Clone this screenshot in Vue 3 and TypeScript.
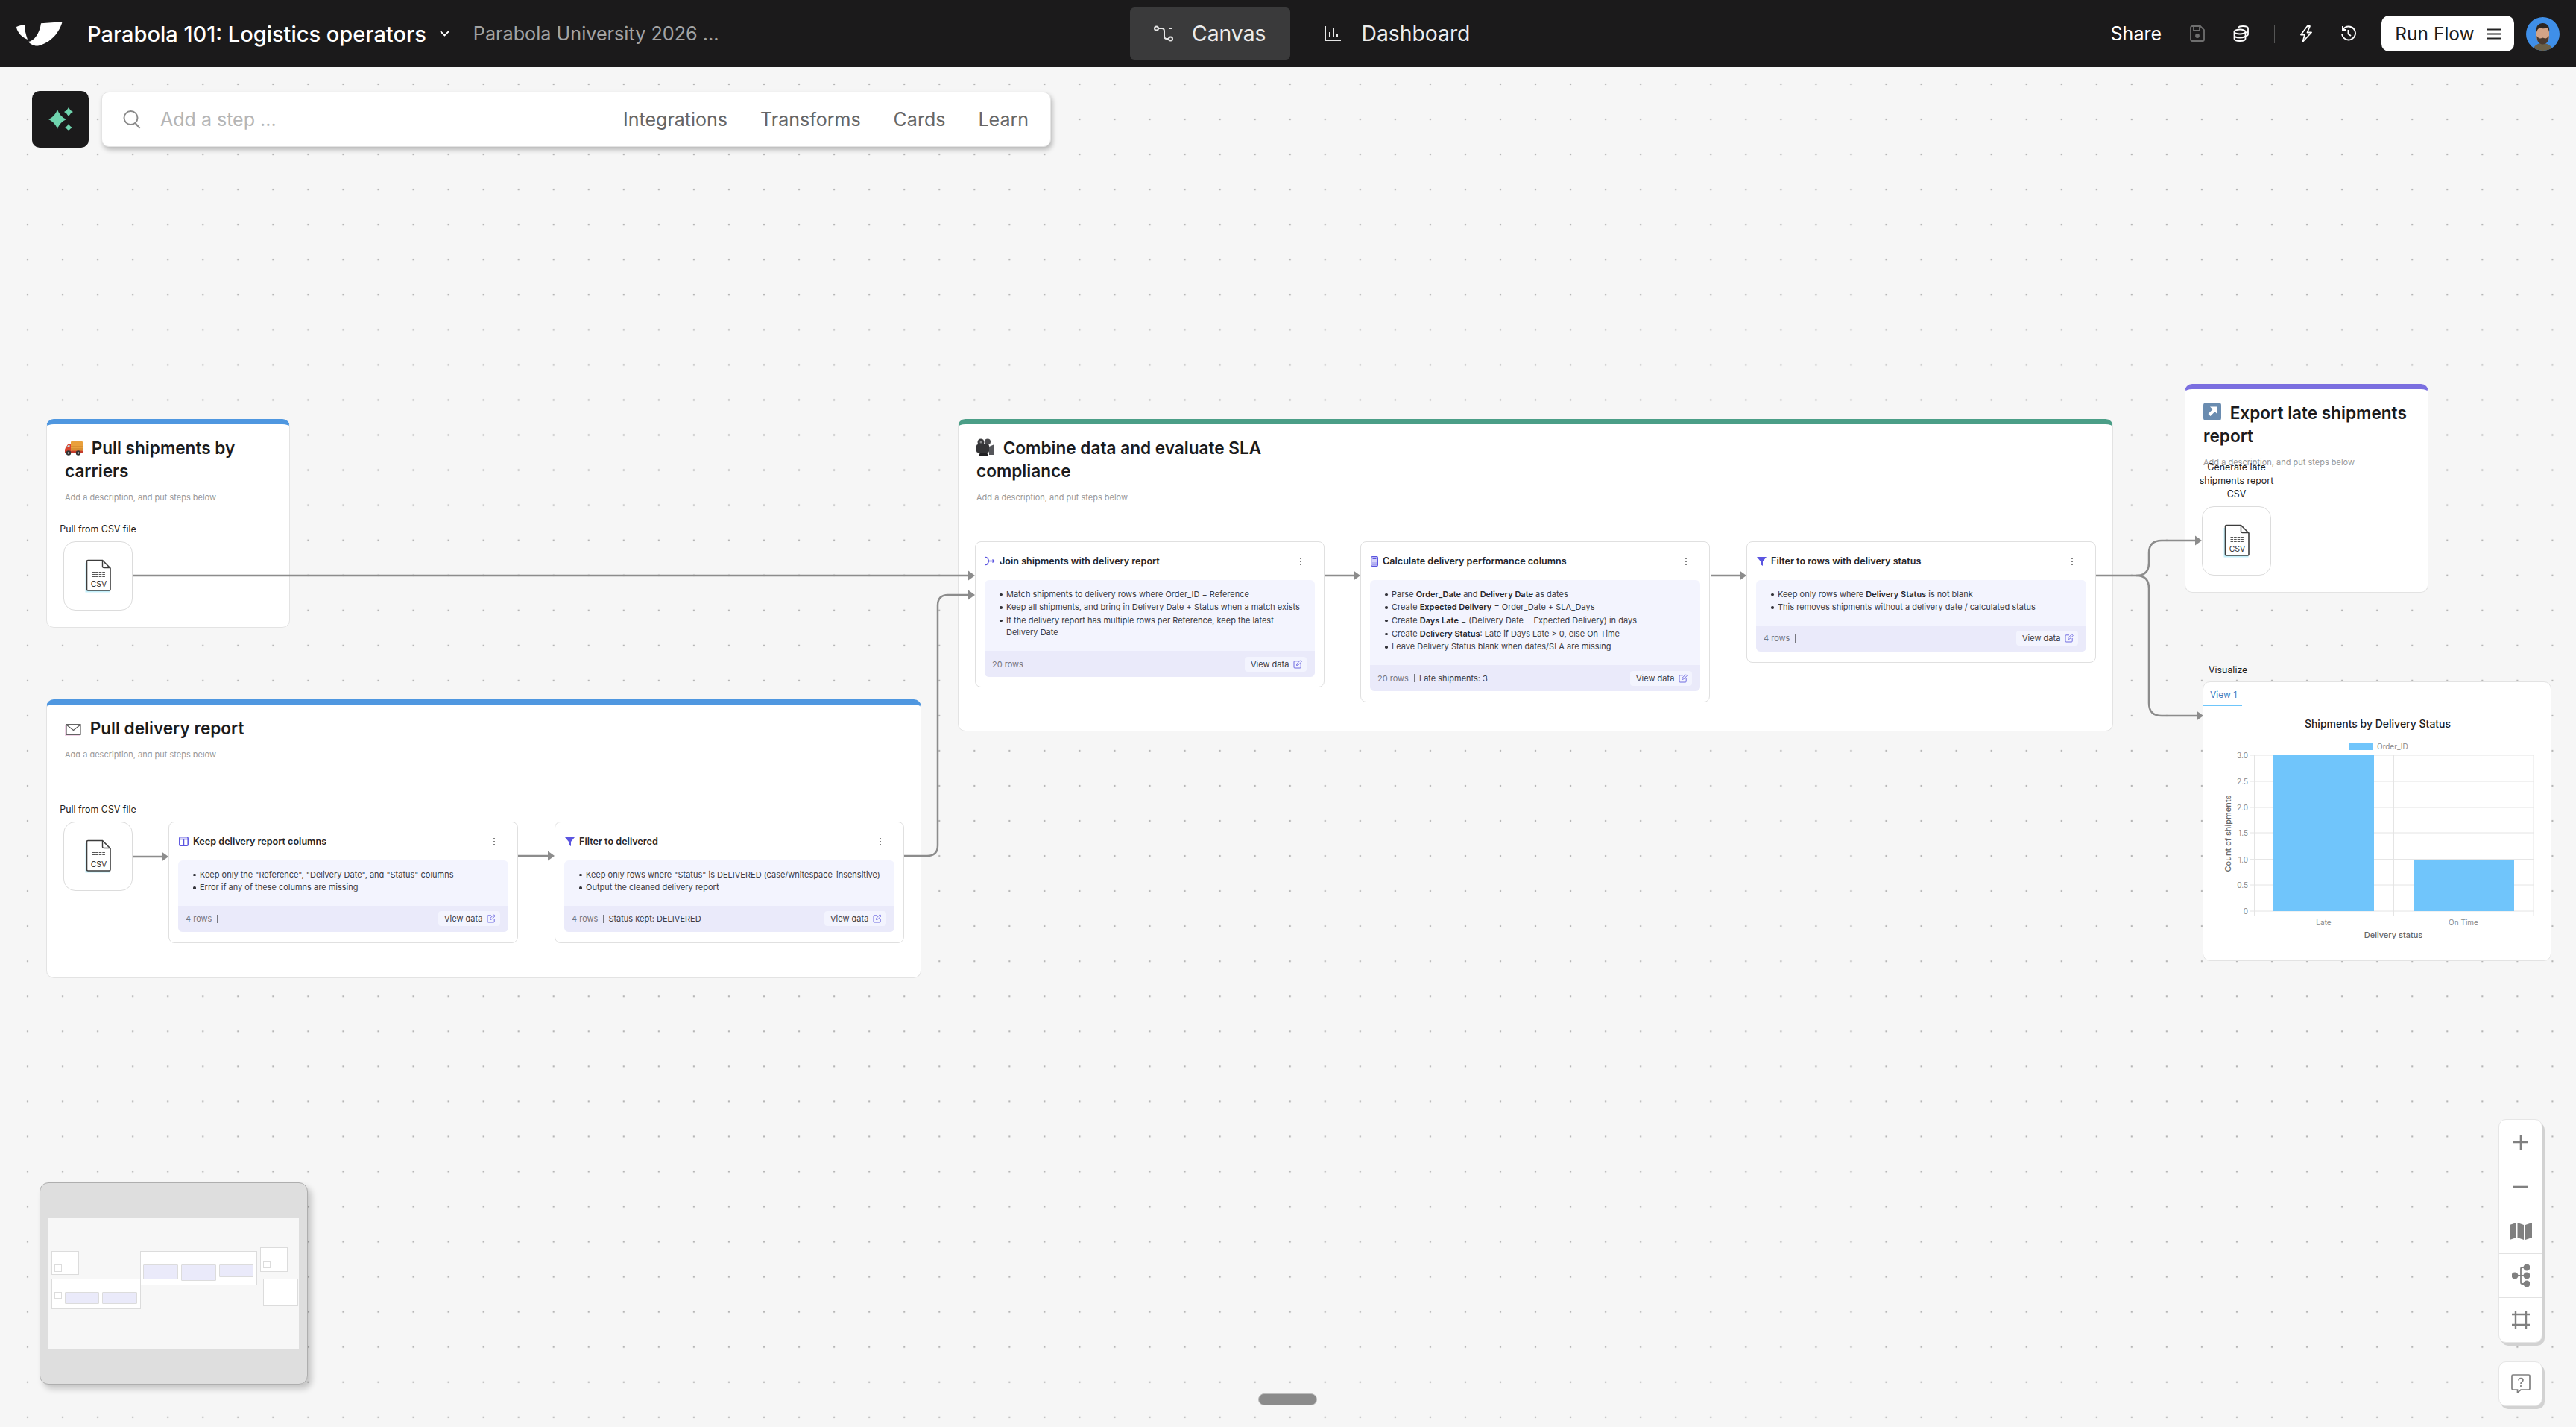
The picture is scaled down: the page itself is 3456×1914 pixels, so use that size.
<script setup lang="ts">
// canvas nodes use page coordinates, the toolbar takes the first 90px
const TOP = 90;

interface Group { x: number; y: number; w: number; h: number; color: string; title: string; icon: string }
interface Step { x: number; y: number; h: number; icon: string; title: string; lines: string[]; rows: string; note?: string }

const groups: Group[] = [
  { x: 62, y: 562, w: 327, h: 280, color: '#4f97e0', title: 'Pull shipments by carriers', icon: 'truck' },
  { x: 62, y: 938, w: 1174, h: 374, color: '#4f97e0', title: 'Pull delivery report', icon: 'mail' },
  { x: 1285, y: 562, w: 1550, h: 419, color: '#4b9e87', title: 'Combine data and evaluate SLA compliance', icon: 'camera' },
  { x: 2931, y: 515, w: 327, h: 280, color: '#7b6fe0', title: 'Export late shipments report', icon: 'export' },
];

const sources = [
  { x: 85, y: 726, label: 'Pull from CSV file' },
  { x: 85, y: 1102, label: 'Pull from CSV file' },
  { x: 2954, y: 679, label: 'Generate late shipments report CSV' },
];

// *text* marks the bold parts of a line
const steps: Step[] = [
  {
    x: 226, y: 1102, h: 163, icon: 'columns', title: 'Keep delivery report columns', rows: '4 rows',
    lines: ['Keep only the "Reference", "Delivery Date", and "Status" columns', 'Error if any of these columns are missing'],
  },
  {
    x: 744, y: 1102, h: 163, icon: 'filter', title: 'Filter to delivered', rows: '4 rows', note: 'Status kept: DELIVERED',
    lines: ['Keep only rows where "Status" is DELIVERED (case/whitespace-insensitive)', 'Output the cleaned delivery report'],
  },
  {
    x: 1308, y: 726, h: 196, icon: 'join', title: 'Join shipments with delivery report', rows: '20 rows',
    lines: [
      'Match shipments to delivery rows where Order_ID = Reference',
      'Keep all shipments, and bring in Delivery Date + Status when a match exists',
      'If the delivery report has multiple rows per Reference, keep the latest Delivery Date',
    ],
  },
  {
    x: 1825, y: 726, h: 216, icon: 'calc', title: 'Calculate delivery performance columns', rows: '20 rows', note: 'Late shipments: 3',
    lines: [
      'Parse *Order_Date* and *Delivery Date* as dates',
      'Create *Expected Delivery* = Order_Date + SLA_Days',
      'Create *Days Late* = (Delivery Date − Expected Delivery) in days',
      'Create *Delivery Status*: Late if Days Late > 0, else On Time',
      'Leave Delivery Status blank when dates/SLA are missing',
    ],
  },
  {
    x: 2343, y: 726, h: 163, icon: 'filter', title: 'Filter to rows with delivery status', rows: '4 rows',
    lines: ['Keep only rows where *Delivery Status* is not blank', 'This removes shipments without a delivery date / calculated status'],
  },
];

const edges = [
  'M178 772H1300',
  'M1212 1148H1244Q1258 1148 1258 1134V812Q1258 798 1272 798H1300',
  'M178 1149H218',
  'M695 1148H736',
  'M1777 772H1817',
  'M2295 772H2335',
  'M2812 772H2866Q2883 772 2883 755V742Q2883 725 2900 725H2946',
  'M2866 772Q2883 772 2883 789V943Q2883 960 2900 960H2948',
];
const arrowTips = [[1308, 772], [1308, 798], [226, 1149], [744, 1148], [1825, 772], [2343, 772], [2954, 725], [2956, 960]];

function arrow([x, y]: number[]) {
  return `${x - 9},${y - 6.5} ${x},${y} ${x - 9},${y + 6.5}`;
}

function box(n: { x: number; y: number; w?: number; h?: number }) {
  return {
    left: `${n.x}px`,
    top: `${n.y - TOP}px`,
    width: n.w ? `${n.w}px` : undefined,
    height: n.h ? `${n.h}px` : undefined,
  };
}

const yTicks = [
  { label: '3.0', y: 99 }, { label: '2.5', y: 134 }, { label: '2.0', y: 169 }, { label: '1.5', y: 203 },
  { label: '1.0', y: 238.6 }, { label: '0.5', y: 273 }, { label: '0', y: 308 },
];

const miniNodes = [
  { x: 3.7, y: 44, w: 37, h: 32, k: 'white' },
  { x: 3.7, y: 80.7, w: 120, h: 41, k: 'white' },
  { x: 123.3, y: 44, w: 156.3, h: 45.7, k: 'white' },
  { x: 283.7, y: 39, w: 37.3, h: 32.7, k: 'white' },
  { x: 288.3, y: 80.7, w: 46.3, h: 37, k: 'white' },
  { x: 8.3, y: 62, w: 9.5, h: 9.7, k: 'white' },
  { x: 8.3, y: 98.7, w: 9.5, h: 9.7, k: 'white' },
  { x: 288.3, y: 57.7, w: 9.5, h: 9.7, k: 'white' },
  { x: 22, y: 98.7, w: 46.3, h: 16.3, k: 'step' },
  { x: 72.3, y: 98.7, w: 46.7, h: 16.3, k: 'step' },
  { x: 127.3, y: 62, w: 46.7, h: 20, k: 'step' },
  { x: 178, y: 62, w: 46.7, h: 22, k: 'step' },
  { x: 228.7, y: 62, w: 46.7, h: 16.7, k: 'step' },
];
</script>

<template>
  <div class="page">
    <header class="topbar">
      <div class="brand">
        <svg class="logo" width="62" height="33" viewBox="0 0 62 33" fill="#fff">
          <path d="M61.6 0C58 14 46 29 29 32.4 24 33 19 30.500 16 27 24 26 31 16 33 2.300 42 1.500 52 1 61.600 0Z" />
          <path d="M0 7C4 5 8 4.500 11 4 11 10 12.500 17 15 24 8 21 1 15 0 7Z" />
        </svg>
        <span class="flow-name">Parabola 101: Logistics operators</span>
        <svg class="chevron" width="13" height="8" viewBox="0 0 13 8" fill="none" stroke="#fff" stroke-width="1.8"><path d="M1 1l5.500 5.500L12 1" /></svg>
        <span class="folder">Parabola University 2026 ...</span>
      </div>
      <nav class="tabs">
        <a class="tab active">
          <svg width="26" height="22" viewBox="0 0 26 22" fill="none" stroke="#e6e6e6" stroke-width="2">
            <circle cx="3.500" cy="4" r="2.500" /><circle cx="22.500" cy="18" r="2.500" />
            <path d="M6 4h5c3 0 3 2 3 4v6c0 2 1 4 3 4h3" /><path d="M20 4h4" />
          </svg>
          Canvas
        </a>
        <a class="tab">
          <svg width="26" height="22" viewBox="0 0 26 22" fill="none" stroke="#e6e6e6" stroke-width="2">
            <path d="M3 1v19h21" /><path d="M9 15V9M14 15V4M19 15v-4" />
          </svg>
          Dashboard
        </a>
      </nav>
      <div class="actions">
        <span class="share">Share</span>
        <svg width="22" height="22" viewBox="0 0 22 22" fill="none" stroke="#6f6f6f" stroke-width="1.800">
          <path d="M2 3a2 2 0 0 1 2-2h11l5 5v13a2 2 0 0 1-2 2H4a2 2 0 0 1-2-2z" /><path d="M6 1v6h8V1" /><circle cx="11" cy="14" r="2" fill="#6f6f6f" />
        </svg>
        <svg width="22" height="22" viewBox="0 0 22 22" fill="none" stroke="#fff" stroke-width="1.800">
          <ellipse cx="9" cy="8.500" rx="7.500" ry="3" /><path d="M1.500 8.500v9.500c0 1.700 3.400 3 7.500 3s7.500-1.300 7.500-3V8.500M1.500 13.500c0 1.700 3.400 3 7.500 3s7.500-1.300 7.500-3" />
          <path d="M7 3c.6-1.200 3-2 6-2 4 0 7 1.300 7 3v8c0 1-1 1.800-3 2.300M19.800 7.500c0 1-1.300 1.800-3.300 2.300" />
        </svg>
        <i class="divider"></i>
        <svg width="18" height="23" viewBox="0 0 18 23" fill="none" stroke="#fff" stroke-width="1.800" stroke-linejoin="round">
          <path d="M10.500 1L2 12.500h5L4.500 22 16 9.500h-5.500L14 1z" />
        </svg>
        <svg width="21" height="22" viewBox="0 0 21 22" fill="none" stroke="#fff" stroke-width="1.900">
          <path d="M3.500 5.500A9 9 0 1 1 2 11" /><path d="M3 1v5h5" /><path d="M10.500 6v5.500l3.500 2.500" />
        </svg>
        <button class="run">
          Run Flow
          <svg width="19" height="15" viewBox="0 0 19 15" stroke="#222" stroke-width="1.900"><path d="M0 1.500h19M0 7.500h19M0 13.500h19" /></svg>
        </button>
        <svg class="avatar" width="45" height="45" viewBox="0 0 45 45">
          <clipPath id="avatar-clip"><circle cx="22.500" cy="22.500" r="22.500" /></clipPath>
          <g clip-path="url(#avatar-clip)">
            <rect width="45" height="45" fill="#3f8fe8" />
            <path d="M9 45c1-7 7-10 13-10s13 3 14 10z" fill="#6b6048" />
            <path d="M14 17c0-6 4-8 8.500-8s8.500 3 8.500 8v9c0 6-4 10-8.500 10S14 32 14 26z" fill="#d3a487" />
            <path d="M14 20c-1.500-8 3-12 8.500-12S32.500 12 31 20c-.5-3-1.500-5-2.500-5.500-4 1-7.500 1-10.500 0-1.500.5-3 2.500-4 5.500z" fill="#2c2522" />
            <path d="M14.500 25c1.500 2 2.500 3.500 4.500 3.500s2.500-1 3.500-1 2 1 3.500 1 3-1.500 4.500-3.500c.5 7-3 11.500-8 11.500s-8.500-4.500-8-11.500z" fill="#4a3a30" />
          </g>
        </svg>
      </div>
    </header>

    <main class="canvas">
      <div v-for="g in groups" :key="g.title" class="group" :style="{ ...box(g), borderTopColor: g.color }">
        <h2 class="group-title">
          <svg v-if="g.icon === 'truck'" class="emoji" width="24" height="20" viewBox="0 0 24 20">
            <rect x="8" y="1" width="16" height="13" rx="1" fill="#e9a03b" />
            <path d="M8 4.500h16M8 8h16M8 11h16" stroke="#c9802a" stroke-width="1.200" />
            <path d="M1 9.500L4 5h4v10H0v-3z" fill="#d8452f" /><path d="M2.500 9L4.500 6H6.500v3z" fill="#bfe3ef" />
            <rect y="13.500" width="24" height="2.500" fill="#c53b2b" />
            <circle cx="5" cy="16.500" r="3.200" fill="#333" /><circle cx="5" cy="16.500" r="1.300" fill="#ccc" />
            <circle cx="18" cy="16.500" r="3.200" fill="#333" /><circle cx="18" cy="16.500" r="1.300" fill="#ccc" />
          </svg>
          <svg v-else-if="g.icon === 'mail'" class="emoji" width="22" height="16" viewBox="0 0 22 16" fill="none">
            <rect x="0" y="2" width="20" height="14" fill="#f2d3e8" />
            <rect x="2" y=".7" width="19" height="13.600" fill="#fff" stroke="#555" stroke-width="1.200" />
            <path d="M2 1l9.500 7.500L21 1" stroke="#555" stroke-width="1.200" />
          </svg>
          <svg v-else-if="g.icon === 'camera'" class="emoji" width="24" height="23" viewBox="0 0 24 23">
            <circle cx="6" cy="5" r="4.500" fill="#3a3a3c" /><circle cx="15" cy="4.500" r="4" fill="#4a4a4d" />
            <rect y="8" width="17" height="11" rx="2" fill="#343436" />
            <path d="M17 11l7-3v14h-7z" fill="#55565a" />
            <path d="M5 19h9l2 4H3z" fill="#202022" /><circle cx="6" cy="5" r="1.500" fill="#8a8a8c" />
          </svg>
          <svg v-else class="emoji" width="24" height="24" viewBox="0 0 24 24">
            <rect width="24" height="24" rx="3.500" fill="#6a8cb0" />
            <path d="M9 5.500h10v10l-3.500-3.500-6 6-3-3 6-6z" fill="#fff" />
          </svg>
          {{ g.title }}
        </h2>
        <p class="group-desc">Add a description, and put steps below</p>
      </div>

      <svg class="edges" width="3456" height="1824" viewBox="0 90 3456 1824">
        <path v-for="d in edges" :key="d" :d="d" fill="none" stroke="#8c8c8c" stroke-width="2.500" />
        <polygon v-for="t in arrowTips" :key="t.join()" :points="arrow(t)" fill="#8c8c8c" />
      </svg>

      <div v-for="s in sources" :key="s.y" class="source" :style="box(s)">
        <span class="source-label">{{ s.label }}</span>
        <svg width="37" height="45" viewBox="0 0 37 45" fill="none">
          <path d="M1.500 5h26l7 7v32.500h-33z" fill="#c3f0fb" />
          <path d="M3.500 3a1.500 1.500 0 0 1 1.500-1.500h19.500l10.500 10.500v28.500a1.500 1.500 0 0 1-1.500 1.500H5a1.500 1.500 0 0 1-1.500-1.500z" fill="#fff" stroke="#3c3c3c" stroke-width="1.600" />
          <path d="M24.500 1.500v8a2 2 0 0 0 2 2H35" stroke="#3c3c3c" stroke-width="1.400" />
          <path d="M10.500 17.500h3.600m1 0h3.600m1 0h3.600m1 0h3.600M10.500 20.500h3.600m1 0h3.600m1 0h3.600m1 0h3.600M10.500 23.500h3.600m1 0h3.600m1 0h3.600m1 0h3.600" stroke="#555" stroke-width="1.200" />
          <text x="19.500" y="37" class="csv" text-anchor="middle">CSV</text>
        </svg>
      </div>

      <article v-for="step in steps" :key="step.title" class="step" :style="{ ...box(step), width: '469px' }">
        <div class="step-head">
          <svg v-if="step.icon === 'filter'" width="13" height="13" viewBox="0 0 13 13" fill="#5b55e0"><path d="M0 1h13L8 7v6L5 11V7z" /></svg>
          <svg v-else-if="step.icon === 'columns'" width="13" height="13" viewBox="0 0 13 13" fill="none" stroke="#5b55e0" stroke-width="1.500">
            <rect x=".8" y=".8" width="11.400" height="11.400" rx="1.500" /><path d="M1 3.500h11M6.500 3.500V12" />
          </svg>
          <svg v-else-if="step.icon === 'join'" width="13" height="13" viewBox="0 0 13 13" fill="none" stroke="#5b55e0" stroke-width="1.300">
            <path d="M0 1.500c3 0 4 2.500 4.500 5-.5 2.500-1.500 5-4.500 5M4.500 6.500H12M9.500 4.500L12 6.500 9.500 8.500" />
          </svg>
          <svg v-else width="10" height="14" viewBox="0 0 10 14" fill="none" stroke="#5b55e0" stroke-width="1.200">
            <rect x=".6" y=".6" width="8.800" height="12.800" rx="1.500" fill="#d6d4f8" />
            <path d="M2.500 3.500h5M2.500 6.500h1M4.500 6.500h1M6.500 6.500h1M2.500 9h1M4.500 9h1M6.500 9h1M2.500 11.200h1M4.500 11.200h1M6.500 11.200h1" />
          </svg>
          <strong>{{ step.title }}</strong>
          <span class="kebab"><i></i><i></i><i></i></span>
        </div>
        <div class="step-inner">
          <ul>
            <li v-for="line in step.lines" :key="line">
              <template v-for="(part, i) in line.split('*')" :key="i">
                <b v-if="i % 2">{{ part }}</b><template v-else>{{ part }}</template>
              </template>
            </li>
          </ul>
          <footer class="step-foot">
            <span class="rows">{{ step.rows }}</span><i class="pipe"></i><span>{{ step.note }}</span>
            <span class="view">
              View data
              <svg width="12" height="12" viewBox="0 0 12 12" fill="none" stroke="#6e6ae0" stroke-width="1">
                <path d="M6 1.800H2a1 1 0 0 0-1 1v7.200a1 1 0 0 0 1 1h7.200a1 1 0 0 0 1-1V6" /><path d="M4.500 7.500l.5-2.200L9.500.8l1.700 1.700L6.700 7z" />
              </svg>
            </span>
          </footer>
        </div>
      </article>

      <section class="viz" :style="box({ x: 2955, y: 914, w: 468, h: 375 })">
        <span class="viz-label">Visualize</span>
        <div class="viz-tab">View 1</div>
        <svg class="chart" width="468" height="344" viewBox="0 0 468 344">
          <text x="234" y="62" class="chart-title" text-anchor="middle">Shipments by Delivery Status</text>
          <rect x="196" y="82" width="31" height="10" fill="#70c5fb" />
          <text x="233" y="91" class="chart-tick" >Order_ID</text>
          <g stroke="#e4e4e4" stroke-width="1">
            <line v-for="t in yTicks" :key="t.label" x1="62" x2="443" :y1="t.y" :y2="t.y" />
            <path d="M68.500 99V315M255.500 99V315M443 99V315" fill="none" />
          </g>
          <rect x="94" y="99" width="135" height="209" fill="#70c5fb" />
          <rect x="282" y="239" width="135" height="69" fill="#70c5fb" />
          <text v-for="t in yTicks" :key="t.label" x="60" :y="t.y + 4" class="chart-tick" text-anchor="end">{{ t.label }}</text>
          <text x="161.500" y="327" class="chart-tick" text-anchor="middle">Late</text>
          <text x="349" y="327" class="chart-tick" text-anchor="middle">On Time</text>
          <text x="255" y="344" class="chart-axis" text-anchor="middle">Delivery status</text>
          <text class="chart-axis" text-anchor="middle" transform="translate(37 204) rotate(-90)">Count of shipments</text>
        </svg>
      </section>

      <div class="assist">
        <svg width="76" height="76" viewBox="0 0 76 76" fill="#6fd4ae">
          <path d="M34 25Q37.500 34.500 46 38 37.500 41.500 34 51 30.500 41.500 22 38 30.500 34.500 34 25Z" />
          <path d="M49 22Q50.800 26.200 55 28 50.800 29.800 49 34 47.200 29.800 43 28 47.200 26.200 49 22Z" />
          <path d="M49 44Q50.500 47.500 54 49 50.500 50.500 49 54 47.500 50.500 44 49 47.500 47.500 49 44Z" />
        </svg>
      </div>
      <div class="search">
        <svg width="26" height="26" viewBox="0 0 26 26" fill="none" stroke="#8a8a8a" stroke-width="2">
          <circle cx="11.500" cy="11" r="9" /><path d="M17.500 18l6 7" />
        </svg>
        <span class="placeholder">Add a step ...</span>
        <a>Integrations</a><a>Transforms</a><a>Cards</a><a>Learn</a>
      </div>

      <div class="minimap">
        <div class="mini-view">
          <i v-for="(n, i) in miniNodes" :key="i" :class="n.k" :style="{ left: `${n.x}px`, top: `${n.y}px`, width: `${n.w}px`, height: `${n.h}px` }"></i>
        </div>
      </div>

      <div class="controls">
        <button><svg width="22" height="22" viewBox="0 0 22 22" stroke="#808080" stroke-width="2.600"><path d="M1 11h20M11 1v20" /></svg></button>
        <button><svg width="22" height="22" viewBox="0 0 22 22" stroke="#808080" stroke-width="2.600"><path d="M1 11h20" /></svg></button>
        <button><svg width="30" height="24" viewBox="0 0 30 24" fill="#808080"><path d="M0 4l9-3v20l-9 3zM10.500 1l8.500 3v20l-8.500-3zM21 4l9-3v20l-9 3z" /></svg></button>
        <button>
          <svg width="24" height="30" viewBox="0 0 24 30" fill="#808080" stroke="#808080" stroke-width="1.800">
            <circle cx="4" cy="15" r="3.600" /><circle cx="20" cy="4" r="3.600" /><circle cx="20" cy="15" r="3.600" /><circle cx="20" cy="26" r="3.600" />
            <path d="M8 15h10M20 4h-6a2 2 0 0 0-2 2v18a2 2 0 0 0 2 2h6" fill="none" />
          </svg>
        </button>
        <button>
          <svg width="24" height="24" viewBox="0 0 24 24" fill="none" stroke="#808080" stroke-width="2.400">
            <path d="M0 5h24M0 19h24M5 0v24M19 0v24" />
          </svg>
        </button>
      </div>
      <button class="help">
        <svg width="26" height="26" viewBox="0 0 26 26" fill="none" stroke="#808080" stroke-width="1.700">
          <path d="M2.500 1h21a1.500 1.500 0 0 1 1.500 1.500v17a1.500 1.500 0 0 1-1.500 1.500H13l-4.500 4v-4h-6A1.500 1.500 0 0 1 1 19.500v-17A1.500 1.500 0 0 1 2.500 1z" />
          <path d="M10 8.500c0-2 1.300-3 3-3s3 1 3 2.600c0 2.400-3 2.300-3 5" /><path d="M13 15v2" />
        </svg>
      </button>
      <span class="handle"></span>
    </main>
  </div>
</template>

<style scoped>
.page {
  width: 3456px;
  height: 1914px;
  display: flex;
  flex-direction: column;
  overflow: hidden;
  font-family: Inter, 'Liberation Sans', sans-serif;
  color: #1d1d1f;
}

.topbar {
  height: 90px;
  flex-shrink: 0;
  display: flex;
  align-items: center;
  background: #1b1a1b;
  color: #fff;
}

.brand {
  width: 1516px;
  display: flex;
  align-items: center;
  padding-left: 22px;
  box-sizing: border-box;
}

.flow-name {
  margin-left: 33px;
  font-size: 29px;
  font-weight: 500;
}

.chevron {
  margin-left: 18px;
}

.folder {
  margin-left: 32px;
  font-size: 25.200px;
  color: #a3a3a3;
}

.tabs {
  display: flex;
  gap: 12px;
}

.tab {
  height: 70px;
  display: flex;
  align-items: center;
  gap: 25px;
  padding: 0 33px 0 32px;
  border-radius: 6px;
  font-size: 28.300px;
  color: #ececec;
}

.tab.active {
  background: #3a3a3b;
}

.actions {
  margin-left: auto;
  padding-right: 22px;
  display: flex;
  align-items: center;
  gap: 37px;
}

.share {
  font-size: 25px;
}

.divider {
  width: 1px;
  height: 25px;
  background: #555;
  margin: 0 -4px;
}

.run {
  width: 178px;
  height: 48px;
  margin-left: -3px;
  display: flex;
  align-items: center;
  justify-content: center;
  gap: 16px;
  border: 0;
  border-radius: 10px;
  background: #fff;
  color: #1d1d1f;
  font: 400 24.500px Inter, sans-serif;
}

.avatar {
  margin-left: -21px;
}

.canvas {
  position: relative;
  flex: 1;
  background-color: #f6f6f6;
  background-image: radial-gradient(circle, #b6b6b6 1.100px, transparent 1.600px);
  background-size: 47.050px 47.050px;
  background-position: 13.500px -0.500px;
}

.group {
  position: absolute;
  box-sizing: border-box;
  padding: 16px 24px;
  background: #fff;
  border: 1px solid #e3e3e3;
  border-top: 7px solid;
  border-radius: 10px;
}

.group-title {
  margin: 0;
  max-width: 400px;
  font-size: 22.600px;
  line-height: 31px;
  font-weight: 600;
  color: #1b1b1d;
}

.emoji {
  vertical-align: -2px;
  margin-right: 6px;
}

.group-desc {
  margin: 12px 0 0;
  font-size: 11px;
  line-height: 16px;
  color: #9a9a9a;
}

.edges {
  position: absolute;
  left: 0;
  top: 0;
  pointer-events: none;
}

.source {
  position: absolute;
  width: 93px;
  height: 93px;
  box-sizing: border-box;
  display: flex;
  align-items: center;
  justify-content: center;
  background: #fff;
  border: 1px solid #dcdcdc;
  border-radius: 16px;
}

.source-label {
  position: absolute;
  left: 50%;
  bottom: calc(100% + 8px);
  width: 125px;
  transform: translateX(-50%);
  text-align: center;
  font-size: 12.400px;
  line-height: 18px;
  color: #222;
}

.csv {
  font: 400 10.500px Inter, sans-serif;
  fill: #333;
}

.step {
  position: absolute;
  box-sizing: border-box;
  padding: 0 12px;
  background: #fff;
  border: 1px solid #e0e0e0;
  border-radius: 8px;
}

.step-head {
  height: 51px;
  display: flex;
  align-items: center;
  gap: 6px;
  padding: 0 1px;
}

.step-head strong {
  font-size: 12.600px;
  font-weight: 600;
  color: #26262a;
}

.kebab {
  margin-left: auto;
  margin-right: 17px;
  display: flex;
  flex-direction: column;
  gap: 2px;
}

.kebab i {
  width: 2px;
  height: 2px;
  border-radius: 50%;
  background: #555;
}

.step-inner {
  border-radius: 6px;
  overflow: hidden;
  background: #f3f4fe;
  font-size: 11px;
  color: #3c3c44;
}

.step-inner ul {
  list-style: none;
  margin: 0;
  padding: 10.500px 18px 15.100px 29px;
}

.step-inner li {
  position: relative;
  line-height: 16.500px;
  margin-bottom: 1.200px;
}

.step-inner li::before {
  content: '';
  position: absolute;
  left: -9px;
  top: 7px;
  width: 3.500px;
  height: 3.500px;
  border-radius: 50%;
  background: #33333a;
}

.step-inner b {
  font-weight: 600;
  color: #26262a;
}

.step-foot {
  height: 35px;
  display: flex;
  align-items: center;
  padding: 0 11px 0 10px;
  background: #eaeafa;
}

.rows {
  color: #77777f;
}

.pipe {
  width: 1px;
  height: 11px;
  margin: 0 6px 0 7px;
  background: #77777f;
}

.view {
  margin-left: auto;
  width: 83px;
  height: 20px;
  box-sizing: border-box;
  display: flex;
  align-items: center;
  justify-content: space-between;
  padding: 0 6px 0 8px;
  border-radius: 4px;
  background: #f3f4fe;
}

.viz {
  position: absolute;
  box-sizing: border-box;
  background: #fff;
  border: 1px solid #e3e3e3;
  border-radius: 10px;
}

.viz-label {
  position: absolute;
  left: 7px;
  bottom: calc(100% + 7px);
  font-size: 12.400px;
  line-height: 18px;
}

.viz-tab {
  width: 52px;
  box-sizing: border-box;
  padding: 9px 0 6px 9px;
  border-bottom: 2px solid #6ec6fb;
  font-size: 12px;
  line-height: 15px;
  color: #3f7dc0;
}

.chart {
  display: block;
  overflow: visible;
  margin-top: -33px;
}

.chart-title {
  font: 500 14px Inter, sans-serif;
  fill: #1d1d1f;
}

.chart-tick {
  font: 400 10px Inter, sans-serif;
  fill: #8a8a8a;
}

.chart-axis {
  font: 500 11px Inter, sans-serif;
  fill: #666;
}

.assist {
  position: absolute;
  left: 43px;
  top: 32px;
  width: 76px;
  height: 76px;
  border-radius: 10px;
  background: #1b1a1b;
}

.search {
  position: absolute;
  left: 136px;
  top: 33px;
  width: 1274px;
  height: 74px;
  box-sizing: border-box;
  display: flex;
  align-items: center;
  padding: 0 29px 0 27px;
  background: #fff;
  border: 1px solid #e4e4e4;
  border-radius: 10px;
  box-shadow: 2px 4px 6px rgba(0, 0, 0, 0.25);
  font-size: 25px;
  color: #666;
}

.placeholder {
  margin-left: 25px;
  margin-right: auto;
  color: #b5b5b5;
}

.search a + a {
  margin-left: 44px;
}

.minimap {
  position: absolute;
  left: 53px;
  top: 1496px;
  width: 360px;
  height: 271px;
  box-sizing: border-box;
  padding: 47px 11px 46px;
  background: #dedede;
  border: 1px solid #aeaeae;
  border-radius: 12px;
  box-shadow: 5px 6px 8px rgba(0, 0, 0, 0.2);
}

.mini-view {
  position: relative;
  height: 100%;
  background: #f7f7f7;
}

.mini-view i {
  position: absolute;
  box-sizing: border-box;
  background: #fff;
  border: 1px solid #dcdcdc;
}

.mini-view i.step {
  background: #eaeafa;
  border-radius: 1px;
}

.controls,
.help {
  position: absolute;
  left: 3352px;
  width: 59px;
  box-sizing: border-box;
  background: #fff;
  border: 1px solid #e6e6e6;
  border-radius: 10px;
  box-shadow: 3px 4px 0 #d2d2d2;
}

.controls {
  top: 1411px;
  display: flex;
  flex-direction: column;
}

.controls button {
  height: 59.500px;
  display: flex;
  align-items: center;
  justify-content: center;
  padding: 0;
  border: 0;
  background: none;
}

.controls button + button {
  border-top: 1px solid #e2e2e2;
}

.help {
  top: 1736px;
  height: 60px;
  display: flex;
  align-items: center;
  justify-content: center;
  padding: 0;
}

.handle {
  position: absolute;
  left: 1688px;
  top: 1779px;
  width: 79px;
  height: 16px;
  border-radius: 8px;
  background: #8b8b8b;
  border: 1px solid #bbb;
  box-sizing: border-box;
}
</style>

<style>
body {
  margin: 0;
}
</style>
